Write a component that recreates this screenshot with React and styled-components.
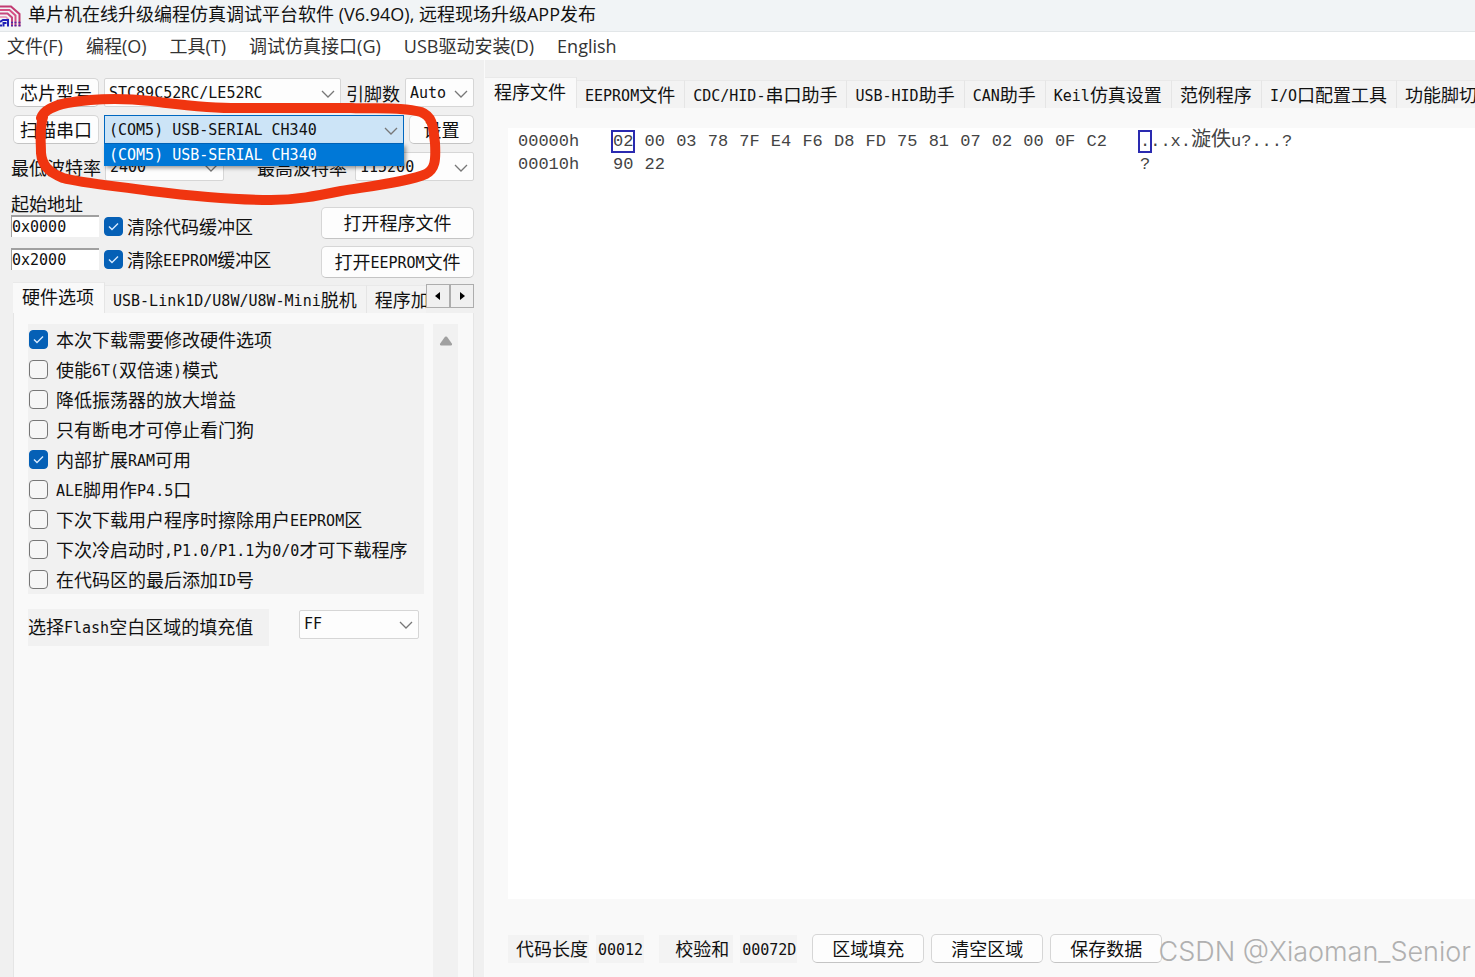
import React, { useState } from "react";
import styled, { createGlobalStyle } from "styled-components";

const MENU_ITEMS = [
  "文件(F)",
  "编程(O)",
  "工具(T)",
  "调试仿真接口(G)",
  "USB驱动安装(D)",
  "English",
];

const MAIN_TABS = [
  "程序文件",
  "EEPROM文件",
  "CDC/HID-串口助手",
  "USB-HID助手",
  "CAN助手",
  "Keil仿真设置",
  "范例程序",
  "I/O口配置工具",
  "功能脚切换",
];

const HARDWARE_TABS = ["硬件选项", "USB-Link1D/U8W/U8W-Mini脱机", "程序加密"];

const HARDWARE_OPTIONS = [
  { label: "本次下载需要修改硬件选项", checked: true },
  { label: "使能6T(双倍速)模式", checked: false },
  { label: "降低振荡器的放大增益", checked: false },
  { label: "只有断电才可停止看门狗", checked: false },
  { label: "内部扩展RAM可用", checked: true },
  { label: "ALE脚用作P4.5口", checked: false },
  { label: "下次下载用户程序时擦除用户EEPROM区", checked: false },
  { label: "下次冷启动时,P1.0/P1.1为0/0才可下载程序", checked: false },
  { label: "在代码区的最后添加ID号", checked: false },
];

const HEX_ROWS = [
  {
    address: "00000h",
    bytes: "02 00 03 78 7F E4 F6 D8 FD 75 81 07 02 00 0F C2".split(" "),
    ascii: [".", "..x.", "漩佚", "u?...?"],
  },
  { address: "00010h", bytes: ["90", "22"], ascii: ["", "?", "", ""] },
];

// half-width characters take exactly half of a full-width one
const Mixed = ({ text }) =>
  text
    .split(/([\x20-\x7e]+)/)
    .filter(Boolean)
    .map((part, index) =>
      /^[\x20-\x7e]/.test(part) ? <Half key={index}>{part}</Half> : part
    );

const DropDown = ({ label, value, options, ...rest }) => (
  <SelectWrap {...rest}>
    <select aria-label={label} defaultValue={value}>
      {(options || [value]).map((option) => (
        <option key={option}>{option}</option>
      ))}
    </select>
    <svg width="14" height="8" viewBox="0 0 14 8">
      <path d="M1 1l6 6 6-6" fill="none" stroke="#777" strokeWidth="1.3" />
    </svg>
  </SelectWrap>
);

const Check = ({ label, checked, gap }) => {
  const [on, setOn] = useState(checked);
  return (
    <CheckLabel $gap={gap}>
      <CheckBox
        type="checkbox"
        checked={on}
        onChange={(e) => setOn(e.target.checked)}
      />
      {on ? (
        <svg width="19" height="19" viewBox="0 0 19 19">
          <path d="M5 9.5l3 3 6-6" fill="none" stroke="#d6eaff" strokeWidth="1.4" />
        </svg>
      ) : (
        ""
      )}
      <span>
        <Mixed text={label} />
      </span>
    </CheckLabel>
  );
};

const Logo = () => (
  <svg width="21" height="25" viewBox="0 0 21 25" fill="none">
    <path d="M0 4.500h11l8.500 7.500v12.500" stroke="#c23a72" strokeWidth="2" />
    <path d="M0 8h9.500l6 5.500v11" stroke="#d64f84" strokeWidth="2" />
    <path d="M0 11.500h7.500l4.500 4v9" stroke="#c8477e" strokeWidth="2" />
    <path d="M0 15h6l2.500 2.500" stroke="#e58bb0" strokeWidth="1.500" />
    <path d="M0 20l3-2h5v6.500M3.500 24.500v-3.500h3M0 23.500h2" stroke="#2020b8" strokeWidth="2" />
    <path d="M11 20.500h2M14.500 20.500h2M18.500 20.500h2M11 23.500h2M14.500 23.500h2M18.500 23.500h2" stroke="#4a2aa8" strokeWidth="1.500" />
  </svg>
);

const App = () => {
  const [mainTab, setMainTab] = useState(0);
  const [hardwareTab, setHardwareTab] = useState(0);

  return (
    <Window>
      <GlobalStyle />
      <TitleBar>
        <Logo />
        <h1>单片机在线升级编程仿真调试平台软件 (V6.94O), 远程现场升级APP发布</h1>
      </TitleBar>

      <MenuBar>
        {MENU_ITEMS.map((item) => (
          <button key={item}>{item}</button>
        ))}
      </MenuBar>

      <Body>
        <SidePanel>
          <Row $indent>
            <Button $width={86}>芯片型号</Button>
            <DropDown label="芯片型号" value="STC89C52RC/LE52RC" $width={237} />
            <Caption>引脚数</Caption>
            <DropDown label="引脚数" value="Auto" $grow />
          </Row>

          <Row $indent>
            <Button $width={86}>扫描串口</Button>
            <ComboBox>
              <DropDown
                label="串口"
                value="(COM5) USB-SERIAL CH340"
                $width={300}
                $active
              />
              <PopupList role="listbox" aria-label="串口">
                <li role="option" aria-selected="true">
                  (COM5) USB-SERIAL CH340
                </li>
              </PopupList>
            </ComboBox>
            <Button $grow>设置</Button>
          </Row>

          <Row $split>
            <div>
              <Caption>最低波特率</Caption>
              <DropDown label="最低波特率" value="2400" $width={119} />
            </div>
            <div>
              <Caption>最高波特率</Caption>
              <DropDown label="最高波特率" value="115200" $width={119} />
            </div>
          </Row>

          <FileRow>
            <AddressBlock>
              <Caption>起始地址</Caption>
              <AddressRow>
                <AddressInput aria-label="程序起始地址" defaultValue="0x0000" />
                <Check label="清除代码缓冲区" checked gap={4} />
              </AddressRow>
              <AddressRow>
                <AddressInput aria-label="EEPROM起始地址" defaultValue="0x2000" />
                <Check label="清除EEPROM缓冲区" checked gap={4} />
              </AddressRow>
            </AddressBlock>
            <FileButtons>
              <Button $tall>打开程序文件</Button>
              <Button $tall>
                <Mixed text="打开EEPROM文件" />
              </Button>
            </FileButtons>
          </FileRow>

          <HardwareTabs>
            <TabStrip role="tablist">
              {HARDWARE_TABS.map((tab, index) => (
                <Tab
                  key={tab}
                  role="tab"
                  aria-selected={hardwareTab === index}
                  $active={hardwareTab === index}
                  onClick={() => setHardwareTab(index)}
                >
                  <Mixed text={tab} />
                </Tab>
              ))}
            </TabStrip>
            <TabArrow
              aria-label="向左"
              onClick={() => setHardwareTab(Math.max(0, hardwareTab - 1))}
            >
              <svg width="6" height="8" viewBox="0 0 6 8">
                <path d="M5 0v8L0 4z" fill="#000" />
              </svg>
            </TabArrow>
            <TabArrow
              aria-label="向右"
              onClick={() => setHardwareTab(Math.min(2, hardwareTab + 1))}
            >
              <svg width="6" height="8" viewBox="0 0 6 8">
                <path d="M1 0v8l5-4z" fill="#000" />
              </svg>
            </TabArrow>
          </HardwareTabs>

          <HardwarePage>
            <div>
              <OptionGroup>
                {HARDWARE_OPTIONS.map((option) => (
                  <Check key={option.label} gap={8} {...option} />
                ))}
              </OptionGroup>
              <FillRow>
                <FillLabel>
                  <Mixed text="选择Flash空白区域的填充值" />
                </FillLabel>
                <DropDown
                  label="选择Flash空白区域的填充值"
                  value="FF"
                  options={["FF", "00"]}
                  $width={120}
                />
              </FillRow>
            </div>
            <ScrollTrack>
              <svg width="14" height="10" viewBox="0 0 14 10">
                <path d="M6 .8Q7 0 8 .8l5 7q.5 1.700-1 1.700H2Q.5 9.500 1 7.800z" fill="#a0a0a0" />
              </svg>
            </ScrollTrack>
          </HardwarePage>

          <Marker viewBox="0 0 410 120" width="410" height="120">
            <path d="M10 26C13 18 22 14 36 11C65 6 90 6 120 9C150 13 175 16 200 16L320 16C350 17 372 15 390 20C403 25 402 37 404 51C405 69 404 77 395 82C380 89 340 94 310 99C285 104 265 108 240 108C200 108 160 104 120 99C85 94 50 91 32 86C17 80 11 73 10 61C10 48 8 38 12 25" />
          </Marker>
        </SidePanel>

        <MainPanel>
          <TabStrip role="tablist">
            {MAIN_TABS.map((tab, index) => (
              <Tab
                key={tab}
                role="tab"
                aria-selected={mainTab === index}
                $active={mainTab === index}
                onClick={() => setMainTab(index)}
              >
                <Mixed text={tab} />
              </Tab>
            ))}
          </TabStrip>

          <MainPage>
            <HexView>
              <HexTable>
                <tbody>
                  {HEX_ROWS.map((row, rowIndex) => (
                    <tr key={row.address}>
                      <th scope="row">{row.address}</th>
                      {Array.from({ length: 16 }, (_, i) => (
                        <td key={i}>
                          {rowIndex === 0 && i === 0 ? (
                            <Cursor>{row.bytes[i]}</Cursor>
                          ) : (
                            row.bytes[i]
                          )}
                        </td>
                      ))}
                      <td className="ascii">
                        {row.ascii[0] ? <Cursor>{row.ascii[0]}</Cursor> : ""}
                        {row.ascii[1]}
                        <Wide>{row.ascii[2]}</Wide>
                        {row.ascii[3]}
                      </td>
                    </tr>
                  ))}
                </tbody>
              </HexTable>
            </HexView>

            <StatusBar>
              <StatusItem>代码长度</StatusItem>
              <StatusItem $last>
                <Half>00012</Half>
              </StatusItem>
              <StatusItem $wide>校验和</StatusItem>
              <StatusItem $last>
                <Half>00072D</Half>
              </StatusItem>
              <Button $width={112}>区域填充</Button>
              <Button $width={112}>清空区域</Button>
              <Button $width={112}>保存数据</Button>
            </StatusBar>
          </MainPage>
        </MainPanel>
      </Body>

      <Watermark>CSDN @Xiaoman_Senior</Watermark>
    </Window>
  );
};

export default App;

const GlobalStyle = createGlobalStyle`
  * {
    box-sizing: border-box;
  }

  body {
    margin: 0;
    background: #f0f0f0;
    color: #111;
    font-family: "Noto Sans CJK SC", sans-serif;
    font-size: 18px;
    line-height: 24px;
  }

  button, input, select {
    font: inherit;
    color: inherit;
    margin: 0;
  }
`;

const Window = styled.div`
  position: relative;
  min-height: 100vh;
  display: flex;
  flex-direction: column;
  overflow: hidden;
`;

const Half = styled.span`
  font-family: "DejaVu Sans Mono", monospace;
  font-size: 15px;
  line-height: 1;
  vertical-align: 1px;
`;

const TitleBar = styled.header`
  display: flex;
  align-items: center;
  gap: 7px;
  height: 32px;
  padding-bottom: 3px;
  background: #f1f4f6;
  border-bottom: 1px solid #e2e6e8;

  h1 {
    margin: 0;
    font-family: "Open Sans", "Noto Sans CJK SC", sans-serif;
    font-size: 18px;
    font-weight: 400;
    white-space: nowrap;
  }
`;

const MenuBar = styled.nav`
  display: flex;
  gap: 23px;
  height: 28px;
  padding-left: 7px;
  background: #fff;

  button {
    padding: 0;
    border: 0;
    background: none;
    color: #333;
    font-family: "Open Sans", "Noto Sans CJK SC", sans-serif;
    white-space: nowrap;
  }
`;

const Body = styled.main`
  flex: 1;
  display: flex;
`;

const SidePanel = styled.section`
  position: relative;
  flex: 0 0 485px;
  min-width: 0;
  padding: 18px 10px 0 11px;
  display: flex;
  flex-direction: column;
  border-right: 1px solid #fafafa;
`;

const Row = styled.div`
  display: flex;
  align-items: center;
  justify-content: ${(props) => (props.$split ? "space-between" : "flex-start")};
  gap: 5px;
  height: 29px;
  margin-bottom: 8px;
  padding-left: ${(props) => (props.$indent ? "2px" : "0")};

  > div {
    display: flex;
    align-items: center;
    gap: ${(props) => (props.$split ? "4px" : "0")};
  }

  > div:last-child {
    gap: 8px;
  }
`;

const Caption = styled.span`
  white-space: nowrap;
`;

const Button = styled.button`
  flex: ${(props) => (props.$grow ? "1" : "none")};
  width: ${(props) => (props.$width ? `${props.$width}px` : "auto")};
  height: ${(props) => (props.$tall ? "32px" : "29px")};
  padding: 0 0 2px;
  background: #fdfdfd;
  border: 1px solid #d6d6d6;
  border-bottom-color: #c4c4c4;
  border-radius: 5px;
  line-height: 24px;
  white-space: nowrap;
`;

const SelectWrap = styled.div`
  position: relative;
  flex: ${(props) => (props.$grow ? "1" : "none")};
  width: ${(props) => (props.$width ? `${props.$width}px` : "auto")};

  select {
    width: 100%;
    height: 29px;
    padding: 0 24px 0 4px;
    appearance: none;
    background: ${(props) => (props.$active ? "#cce4f7" : "#fdfdfd")};
    border: 1px solid ${(props) => (props.$active ? "#0067c0" : "#d6d6d6")};
    border-radius: ${(props) => (props.$active ? "0" : "2px")};
    font-family: "DejaVu Sans Mono", monospace;
    font-size: 15px;
  }

  svg {
    position: absolute;
    right: 6px;
    top: 12px;
    pointer-events: none;
  }
`;

const ComboBox = styled.div`
  position: relative;
`;

const PopupList = styled.ul`
  position: absolute;
  z-index: 2;
  top: 100%;
  left: 0;
  right: 0;
  margin: 0;
  padding: 0;
  list-style: none;
  box-shadow: 2px 2px 4px rgba(0, 0, 0, 0.4);

  li {
    padding-left: 5px;
    background: #0078d7;
    color: #fff;
    font-family: "DejaVu Sans Mono", monospace;
    font-size: 15px;
    line-height: 22px;
  }
`;

const FileRow = styled.div`
  display: flex;
  justify-content: space-between;
  margin: 2px 0 4px;
`;

const AddressBlock = styled.div`
  display: flex;
  flex-direction: column;
`;

const AddressRow = styled.div`
  display: flex;
  align-items: center;
  gap: 5px;
  height: 22px;

  & + & {
    margin-top: 11px;
  }
`;

const AddressInput = styled.input`
  width: 88px;
  height: 22px;
  padding: 0;
  background: #fff;
  border: 0;
  border-top: 2px solid #a0a0a0;
  border-left: 1px solid #a0a0a0;
  font-family: "DejaVu Sans Mono", monospace;
  font-size: 15px;
`;

const FileButtons = styled.div`
  display: flex;
  flex-direction: column;
  gap: 7px;
  width: 153px;
  padding-top: 16px;
`;

const CheckLabel = styled.label`
  position: relative;
  display: flex;
  align-items: center;
  gap: ${(props) => props.$gap}px;
  white-space: nowrap;

  svg {
    position: absolute;
    left: 0;
    pointer-events: none;
  }
`;

const CheckBox = styled.input`
  appearance: none;
  flex: none;
  width: 19px;
  height: 19px;
  background: #f6f6f6;
  border: 1px solid #777;
  border-radius: 4px;

  &:checked {
    background: #0560b6;
    border-color: #0560b6;
  }
`;

const HardwareTabs = styled.div`
  display: flex;
  padding-left: 2px;
`;

const TabStrip = styled.div`
  flex: 1;
  min-width: 0;
  display: flex;
  align-items: flex-end;
  height: 31px;
  overflow: hidden;
`;

const Tab = styled.button`
  flex: none;
  height: ${(props) => (props.$active ? "31px" : "28px")};
  padding: ${(props) => (props.$active ? "0 10px 5px 9px" : "0 9px 2px 8px")};
  background: ${(props) => (props.$active ? "#f9f9f9" : "#f3f3f3")};
  border: 0;
  border-top: 1px solid #e9e9e9;
  border-right: 1px solid #e5e5e5;
  white-space: nowrap;
`;

const TabArrow = styled.button`
  width: 24px;
  height: 24px;
  margin-top: 2px;
  padding: 0;
  display: flex;
  align-items: center;
  justify-content: center;
  background: #f0f0f0;
  border: 1px solid #adadad;
`;

const HardwarePage = styled.div`
  flex: 1;
  display: flex;
  gap: 9px;
  margin-left: 2px;
  padding: 11px 15px 0 14px;
  background: #f9f9f9;
  border-left: 1px solid #e5e5e5;
  border-right: 1px solid #e5e5e5;
`;

const OptionGroup = styled.div`
  width: 396px;
  background: #f1f1f1;

  label {
    height: 30px;
    padding-left: 1px;
  }

  label svg {
    left: 1px;
  }
`;

const FillRow = styled.div`
  display: flex;
  gap: 30px;
  margin-top: 15px;
`;

const FillLabel = styled.span`
  width: 241px;
  height: 37px;
  line-height: 35px;
  background: #f1f1f1;
  white-space: nowrap;
`;

const ScrollTrack = styled.div`
  flex: 1;
  display: flex;
  justify-content: center;
  align-items: flex-start;
  padding-top: 12px;
  background: #f1f1f1;
`;

const Marker = styled.svg`
  position: absolute;
  z-index: 3;
  left: 31px;
  top: 32px;
  pointer-events: none;

  path {
    fill: none;
    stroke: #f03510;
    stroke-width: 10;
    stroke-linecap: round;
    stroke-linejoin: round;
  }
`;

const MainPanel = styled.section`
  flex: 1;
  min-width: 0;
  display: flex;
  flex-direction: column;
  padding-top: 17px;

  > [role="tablist"] {
    flex: none;
  }
`;

const MainPage = styled.div`
  flex: 1;
  display: flex;
  flex-direction: column;
  padding: 20px 0 14px 23px;
  background: #f9f9f9;
`;

const HexView = styled.div`
  flex: 1;
  padding: 2px 0 0 10px;
  background: #fff;
`;

const HexTable = styled.table`
  width: 840px;
  table-layout: fixed;
  border-collapse: collapse;
  color: #444;
  font-family: "Liberation Mono", "Noto Sans CJK SC", monospace;
  font-size: 17px;
  line-height: 23px;

  th,
  td {
    padding: 0;
    font-weight: 400;
    text-align: left;
    white-space: nowrap;
  }

  th {
    width: 95px;
  }

  .ascii {
    width: 240px;
    padding-left: 22px;
  }
`;

const Wide = styled.span`
  font-family: "Noto Sans CJK SC", sans-serif;
  font-size: 20px;
  line-height: 0;
`;

const Cursor = styled.span`
  outline: 2px solid #2a2ab0;
`;

const StatusBar = styled.footer`
  display: flex;
  align-items: center;
  gap: 7px;
  margin-top: 35px;
`;

const StatusItem = styled.span`
  height: 28px;
  padding: ${(props) =>
    props.$wide ? "0 4px 0 16px" : props.$last ? "0 1px 0 2px" : "0 1px 0 8px"};
  margin-right: ${(props) => (props.$last ? "8px" : "0")};
  background: #f3f3f3;
  line-height: 26px;
  white-space: nowrap;
`;

const Watermark = styled.span`
  position: absolute;
  right: 4px;
  bottom: 8px;
  color: #b0b0b0;
  font-family: Inter, sans-serif;
  font-size: 27px;
  font-weight: 300;
  line-height: 34px;
  pointer-events: none;
`;
